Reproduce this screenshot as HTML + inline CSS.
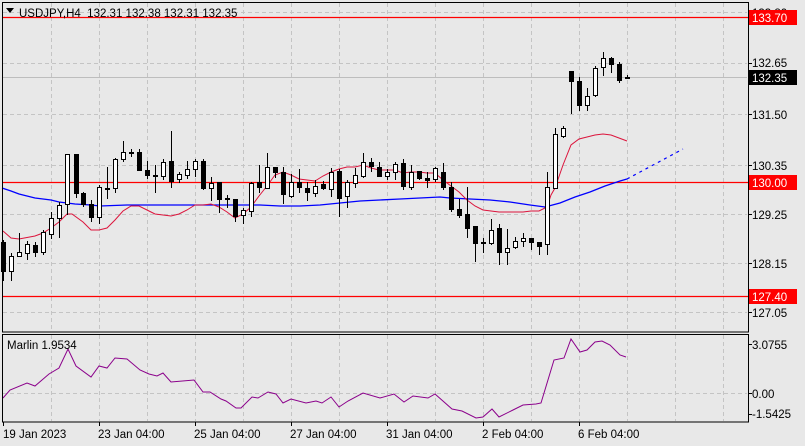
<!DOCTYPE html>
<html><head><meta charset="utf-8"><style>
html,body{margin:0;padding:0;background:#e8e8e8;}
svg{display:block;font-family:"Liberation Sans",Tahoma,sans-serif;}
</style></head><body>
<svg width="805" height="446" viewBox="0 0 805 446" xmlns="http://www.w3.org/2000/svg">
<rect width="805" height="446" fill="#e8e8e8"/>
<g stroke="#c4c4c4" stroke-dasharray="4,3" stroke-width="1">
<line x1="3" y1="12.5" x2="747" y2="12.5"/><line x1="3" y1="63.5" x2="747" y2="63.5"/><line x1="3" y1="114.5" x2="747" y2="114.5"/><line x1="3" y1="165.5" x2="747" y2="165.5"/><line x1="3" y1="214.5" x2="747" y2="214.5"/><line x1="3" y1="263.5" x2="747" y2="263.5"/><line x1="3" y1="312.5" x2="747" y2="312.5"/>
<line x1="3" y1="393.5" x2="747" y2="393.5"/>
</g>
<g stroke="#c4c4c4" stroke-dasharray="4,3">
<path d="M51.5 3V331M99.5 3V331M147.5 3V331M195.5 3V331M243.5 3V331M291.5 3V331M339.5 3V331M387.5 3V331M435.5 3V331M483.5 3V331M531.5 3V331M579.5 3V331M627.5 3V331M675.5 3V331M723.5 3V331"/>
<path d="M51.5 335V421M99.5 335V421M147.5 335V421M195.5 335V421M243.5 335V421M291.5 335V421M339.5 335V421M387.5 335V421M435.5 335V421M483.5 335V421M531.5 335V421M579.5 335V421M627.5 335V421M675.5 335V421M723.5 335V421"/>
</g>
<line x1="3" y1="77.5" x2="747" y2="77.5" stroke="#bdbdbd"/>
<g stroke="#ff0000" stroke-width="1.2">
<line x1="3" y1="17.5" x2="748" y2="17.5"/><line x1="3" y1="182.5" x2="748" y2="182.5"/><line x1="3" y1="296.5" x2="748" y2="296.5"/>
</g>
<polyline fill="none" stroke="#0000ff" stroke-width="1.3" points="2,188 11,191 19,194 35,198 51,200 59,202 75,204 91,205 100,206 127,205 170,205 200,205 230,205 260,205 280,206 300,206 320,205 340,203 360,201 380,200 400,199 420,198 440,197 450,198 470,199 490,200 510,202 530,205 545,207 560,203 575,197 590,192 605,186 620,181 627,179"/>
<line x1="627" y1="179" x2="683" y2="149" stroke="#0000ff" stroke-width="1.2" stroke-dasharray="3,4"/>
<polyline fill="none" stroke="#dc143c" stroke-width="1" points="3,231 11,238 19,239 35,236 43,233 51,228 59,222 67,214 72,214 83,222 91,230 99,230 107,228 115,220 123,211 131,206 139,206 147,210 155,214 163,215 171,216 179,214 187,210 195,205 203,205 211,204 219,207 227,212 235,218 243,214 251,207 259,196 267,186 275,175 283,172 291,175 299,179 307,180 315,181 323,176 331,172 339,169 347,167 355,167 363,165 371,168 379,170 387,170 395,170 403,173 411,172 419,172 427,173 435,173 443,180 451,186 459,192 467,200 475,206 483,210 491,211 499,212 507,212 515,212 523,212 531,211 539,211 547,207 551,195 555,188 563,165 571,145 579,139 587,137 595,135 603,134 611,135 619,138 627,141"/>
<g stroke="#000" stroke-width="1" shape-rendering="crispEdges">
<!-- wicks: x, top, bottom -->
<path d="M3.5 240V281M11.5 253V281M19.5 233V257M27.5 241V260M35.5 242V257M43.5 230V255M51.5 212V239M59.5 202V238M67.5 154V215M76.5 154V198M83.5 192V207M91.5 200V222M99.5 185V224M107.5 167V199M115.5 158V193M123.5 141V162M131.5 149V157M139.5 149V170M147.5 161V179M155.5 165V193M163.5 159V180M171.5 131V188M179.5 172V183M187.5 161V179M195.5 159V177M203.5 159V190M211.5 177V201M219.5 182V213M227.5 195V208M235.5 199V222M243.5 208V224M251.5 182V217M259.5 165V193M267.5 153V188M275.5 167V178M283.5 167V204M291.5 174V198M299.5 169V193M307.5 182V201M315.5 180V197M323.5 181V190M331.5 168V197M339.5 169V217M347.5 180V208M355.5 168V188M363.5 153V178M371.5 158V172M379.5 162V176M387.5 169V180M395.5 162V180M403.5 159V190M411.5 165V190M419.5 171V180M427.5 172V188M435.5 167V182M443.5 163V190M451.5 182V212M459.5 199V218M467.5 187V238M475.5 226V262M483.5 238V253M491.5 219V245M499.5 224V265M507.5 229V265M515.5 237V249M523.5 233V247M531.5 238V250M539.5 242V255M547.5 172V255M555.5 128V188M563.5 126V138M571.5 71V114M579.5 77V111M587.5 88V111M595.5 66V97M603.5 52V76M611.5 57V73M619.5 62V83M627.5 75V79"/>
</g>
<g stroke="#000" stroke-width="1" shape-rendering="crispEdges">
<!-- bear bodies black -->
<rect x="1.5" y="242.5" width="4" height="29" fill="#000"/>
<rect x="33.5" y="245.5" width="4" height="7" fill="#000"/>
<rect x="74.5" y="154.5" width="4" height="39" fill="#000"/>
<rect x="81.5" y="193.5" width="4" height="11" fill="#000"/>
<rect x="89.5" y="204.5" width="4" height="13" fill="#000"/>
<rect x="137.5" y="152.5" width="4" height="18" fill="#000"/>
<rect x="145.5" y="170.5" width="4" height="5" fill="#000"/>
<rect x="153.5" y="175.5" width="4" height="1" fill="#000"/>
<rect x="169.5" y="161.5" width="4" height="20" fill="#000"/>
<rect x="201.5" y="161.5" width="4" height="27" fill="#000"/>
<rect x="217.5" y="182.5" width="4" height="17" fill="#000"/>
<rect x="225.5" y="198.5" width="4" height="1" fill="#000"/>
<rect x="233.5" y="199.5" width="4" height="17" fill="#000"/>
<rect x="257.5" y="182.5" width="4" height="5" fill="#000"/>
<rect x="273.5" y="167.5" width="4" height="5" fill="#000"/>
<rect x="281.5" y="172.5" width="4" height="22" fill="#000"/>
<rect x="297.5" y="182.5" width="4" height="5" fill="#000"/>
<rect x="305.5" y="188.5" width="4" height="4" fill="#000"/>
<rect x="321.5" y="184.5" width="4" height="4" fill="#000"/>
<rect x="337.5" y="171.5" width="4" height="27" fill="#000"/>
<rect x="369.5" y="162.5" width="4" height="4" fill="#000"/>
<rect x="377.5" y="167.5" width="4" height="9" fill="#000"/>
<rect x="401.5" y="163.5" width="4" height="23" fill="#000"/>
<rect x="417.5" y="171.5" width="4" height="7" fill="#000"/>
<rect x="425.5" y="178.5" width="4" height="2" fill="#000"/>
<rect x="441.5" y="172.5" width="4" height="15" fill="#000"/>
<rect x="449.5" y="187.5" width="4" height="22" fill="#000"/>
<rect x="457.5" y="209.5" width="4" height="6" fill="#000"/>
<rect x="465.5" y="214.5" width="4" height="14" fill="#000"/>
<rect x="473.5" y="226.5" width="4" height="17" fill="#000"/>
<rect x="481.5" y="242.5" width="4" height="1" fill="#000"/>
<rect x="497.5" y="228.5" width="4" height="24" fill="#000"/>
<rect x="529.5" y="238.5" width="4" height="4" fill="#000"/>
<rect x="537.5" y="242.5" width="4" height="4" fill="#000"/>
<rect x="569.5" y="71.5" width="4" height="10" fill="#000"/>
<rect x="577.5" y="81.5" width="4" height="24" fill="#000"/>
<rect x="609.5" y="58.5" width="4" height="6" fill="#000"/>
<rect x="617.5" y="64.5" width="4" height="16" fill="#000"/>
<rect x="625.5" y="77.5" width="4" height="1" fill="#000"/>
<!-- bull bodies white -->
<rect x="9.5" y="256.5" width="4" height="15" fill="#fff"/>
<rect x="17.5" y="252.5" width="4" height="4" fill="#fff"/>
<rect x="25.5" y="244.5" width="4" height="9" fill="#fff"/>
<rect x="41.5" y="232.5" width="4" height="20" fill="#fff"/>
<rect x="49.5" y="218.5" width="4" height="16" fill="#fff"/>
<rect x="57.5" y="205.5" width="4" height="13" fill="#fff"/>
<rect x="65.5" y="154.5" width="4" height="50" fill="#fff"/>
<rect x="97.5" y="187.5" width="4" height="30" fill="#fff"/>
<rect x="105.5" y="188.5" width="4" height="1" fill="#000"/>
<rect x="113.5" y="159.5" width="4" height="29" fill="#fff"/>
<rect x="121.5" y="152.5" width="4" height="7" fill="#fff"/>
<rect x="129.5" y="152.5" width="4" height="1" fill="#000"/>
<rect x="161.5" y="162.5" width="4" height="14" fill="#fff"/>
<rect x="177.5" y="174.5" width="4" height="5" fill="#fff"/>
<rect x="185.5" y="169.5" width="4" height="6" fill="#fff"/>
<rect x="193.5" y="161.5" width="4" height="8" fill="#fff"/>
<rect x="209.5" y="183.5" width="4" height="5" fill="#fff"/>
<rect x="241.5" y="210.5" width="4" height="5" fill="#fff"/>
<rect x="249.5" y="183.5" width="4" height="28" fill="#fff"/>
<rect x="265.5" y="167.5" width="4" height="21" fill="#fff"/>
<rect x="289.5" y="182.5" width="4" height="14" fill="#fff"/>
<rect x="313.5" y="186.5" width="4" height="7" fill="#fff"/>
<rect x="329.5" y="172.5" width="4" height="17" fill="#fff"/>
<rect x="345.5" y="182.5" width="4" height="14" fill="#fff"/>
<rect x="353.5" y="175.5" width="4" height="8" fill="#fff"/>
<rect x="361.5" y="162.5" width="4" height="14" fill="#fff"/>
<rect x="385.5" y="172.5" width="4" height="4" fill="#fff"/>
<rect x="393.5" y="164.5" width="4" height="8" fill="#fff"/>
<rect x="409.5" y="172.5" width="4" height="15" fill="#fff"/>
<rect x="433.5" y="168.5" width="4" height="11" fill="#fff"/>
<rect x="489.5" y="230.5" width="4" height="13" fill="#fff"/>
<rect x="505.5" y="248.5" width="4" height="4" fill="#fff"/>
<rect x="513.5" y="241.5" width="4" height="6" fill="#fff"/>
<rect x="521.5" y="238.5" width="4" height="3" fill="#fff"/>
<rect x="545.5" y="187.5" width="4" height="57" fill="#fff"/>
<rect x="553.5" y="134.5" width="4" height="54" fill="#fff"/>
<rect x="561.5" y="128.5" width="4" height="8" fill="#fff"/>
<rect x="585.5" y="96.5" width="4" height="9" fill="#fff"/>
<rect x="593.5" y="68.5" width="4" height="27" fill="#fff"/>
<rect x="601.5" y="58.5" width="4" height="9" fill="#fff"/>
</g>
<polyline fill="none" stroke="#8b008b" stroke-width="1" points="3,398 10,390 27,383 35,386 49,374 59,368 68,349 76,366 91,377 99,366 107,368 115,358 127,359 140,370 149,374 157,376 163,373 171,382 194,380 203,392 210,392 221,399 226,401 236,408 241,408 252,397 258,398 268,392 276,394 283,403 291,399 306,403 316,401 322,403 331,397 339,407 348,401 363,393 380,398 394,394 404,402 413,396 428,398 435,394 452,409 462,411 476,418 483,417 492,409 499,417 513,410 523,405 536,404 541,403 554,360 564,358 571,339 580,352 587,350 595,342 602,341 610,345 620,355 626,357"/>
<!-- frames -->
<g fill="none" stroke="#000" stroke-width="1" shape-rendering="crispEdges">
<rect x="2.5" y="2.5" width="746" height="329.5"/>
<rect x="2.5" y="334.5" width="746" height="87.5"/>
</g>
<!-- ticks -->
<g stroke="#000" shape-rendering="crispEdges">
<path d="M748 17.5h4M748 63.5h4M748 114.5h4M748 165.5h4M748 214.5h4M748 263.5h4M748 312.5h4M748 344.5h4M748 393.5h4M748 414.5h4"/>
<path d="M3.5 422v4M99.5 422v4M195.5 422v4M291.5 422v4M387.5 422v4M483.5 422v4M579.5 422v4"/>
</g>
<g font-size="11.5" fill="#000">
<text x="752" y="17">133.80</text>
<text x="752" y="67">132.65</text>
<text x="752" y="119">131.50</text>
<text x="752" y="170">130.35</text>
<text x="752" y="219">129.25</text>
<text x="752" y="268">128.15</text>
<text x="752" y="317">127.05</text>
<text x="752" y="349">3.0755</text>
<text x="752" y="398">0.00</text>
<text x="752" y="418">-1.5425</text>
</g>
<rect x="749" y="10" width="48" height="15" fill="#ff0000"/>
<text x="752" y="22" font-size="11.5" fill="#fff">133.70</text>
<rect x="749" y="70" width="48" height="15" fill="#000"/>
<text x="752" y="82" font-size="11.5" fill="#fff">132.35</text>
<rect x="749" y="175" width="48" height="15" fill="#ff0000"/>
<text x="752" y="187" font-size="11.5" fill="#fff">130.00</text>
<rect x="749" y="289" width="48" height="15" fill="#ff0000"/>
<text x="752" y="301" font-size="11.5" fill="#fff">127.40</text>
<path d="M6 8h8l-4 5z" fill="#000"/>
<text x="19" y="17" font-size="11.5" fill="#000" xml:space="preserve">USDJPY,H4  132.31 132.38 132.31 132.35</text>
<text x="7" y="349" font-size="11.5" fill="#000">Marlin 1.9534</text>
<g font-size="11.5" fill="#000">
<text x="3" y="438">19 Jan 2023</text>
<text x="98" y="438">23 Jan 04:00</text>
<text x="194" y="438">25 Jan 04:00</text>
<text x="290" y="438">27 Jan 04:00</text>
<text x="386" y="438">31 Jan 04:00</text>
<text x="482" y="438">2 Feb 04:00</text>
<text x="578" y="438">6 Feb 04:00</text>
</g>
</svg>
</body></html>
